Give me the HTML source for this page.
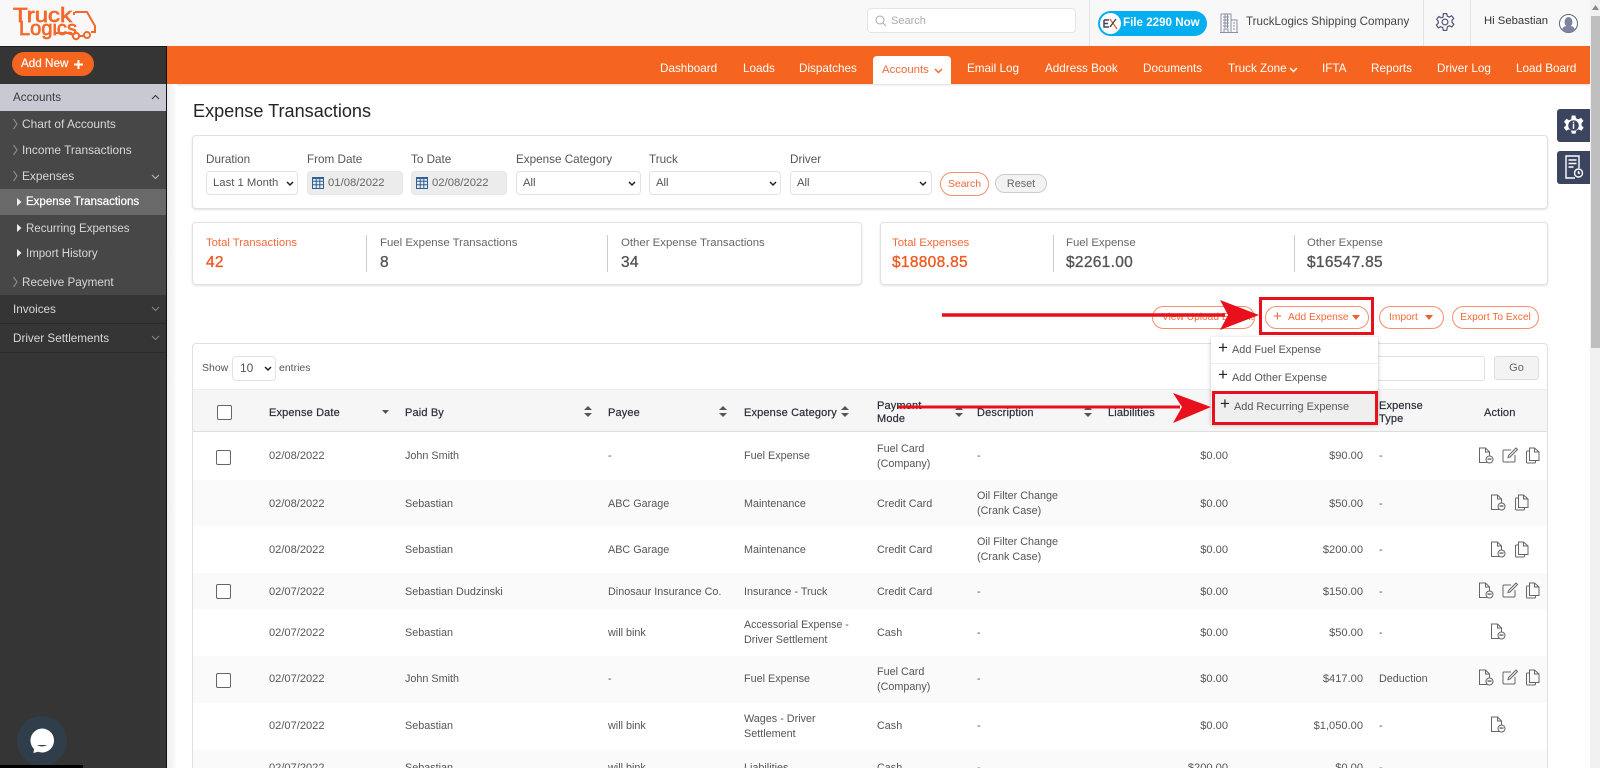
<!DOCTYPE html>
<html lang="en"><head><meta charset="utf-8"><title>Expense Transactions</title>
<style>
*{box-sizing:border-box}
html,body{margin:0;padding:0;width:1600px;height:768px;overflow:hidden;background:#fff}
body{position:relative;font-family:"Liberation Sans",sans-serif;font-size:11px;color:#555}
.a,.t{position:absolute}
.t{line-height:16px;white-space:nowrap}
.nav{color:#fff;font-size:11.7px;top:61px}
.sb{color:#d8d8d8;font-size:11.9px}
.lab{font-size:11.7px;color:#555;top:152px}
.ctl{position:absolute;top:171px;height:24px;background:#fff;border:1px solid #e2e2e2;border-radius:4px;font-size:11.3px;line-height:23px;padding-left:6px;color:#555}
.dis{background:#ececec;padding-left:20px;color:#666}
.card{position:absolute;background:#fff;border:1px solid #e1e1e1;border-radius:4px;box-shadow:0 1px 2px rgba(0,0,0,.12)}
.sl{font-size:11.4px;top:235px;color:#666}
.sv{font-size:15.5px;top:255px;color:#555;letter-spacing:.3px;-webkit-text-stroke:.35px}
.or{color:#f05a22}
.div{position:absolute;width:1px;background:#ccc;top:235px;height:37px}
.btn{position:absolute;top:306px;height:23px;border:1px solid #f58f6c;border-radius:12px;color:#f26a35;font-size:10.2px;line-height:21px;background:#fff;white-space:nowrap;overflow:hidden}
.th{font-size:11px;color:#2a2d3a;-webkit-text-stroke:.2px;letter-spacing:.15px;margin-top:1px}
.c{font-size:10.8px;color:#555}
.d{font-size:11.1px}
.r{text-align:right}
.rw{position:absolute;left:193px;width:1354px;background:#fafafa}
.cb{position:absolute;width:15px;height:15px;border:1.5px solid #666;border-radius:2px;background:#fff}
.i{position:absolute;width:16px;height:17px;fill:none;stroke:#666;stroke-width:1}
.dd{font-size:10.9px;color:#555;margin-top:1px}
.pl{font-size:17px;color:#222}
</style></head><body>
<svg width="0" height="0" style="position:absolute">
<symbol id="f" viewBox="0 0 16 17"><path d="M9 15.500H1.500V1h6l4 4v4M7.500 1v4h4" /><circle cx="11.500" cy="12.500" r="3.500"/><path d="M9.500 12.500h4M9.500 11.300h4" stroke-width=".7"/></symbol>
<symbol id="e" viewBox="0 0 16 17"><path d="M9 3H2a1 1 0 0 0-1 1v10a1 1 0 0 0 1 1h10a1 1 0 0 0 1-1V8"/><path d="M14 1l1.500 1.500L8 10l-2 .6.500-2z"/></symbol>
<symbol id="p" viewBox="0 0 16 17"><path d="M4 4H2.500a1 1 0 0 0-1 1v10a1 1 0 0 0 1 1h7a1 1 0 0 0 1-1v-1.500"/><path d="M4.500 1h5l4.500 4v8.500H4.500zM9.500 1v4h4.500"/></symbol>
</svg>

<!-- top header -->
<div class="a" style="left:0;top:0;width:1590px;height:46px;background:#f8f8f8"></div>
<svg class="a" style="left:8px;top:2px" width="92" height="42" viewBox="0 0 92 42">
<path d="M67 10H79L87 24V30H83M66 10v3M47 31H64M72 34H76" fill="none" stroke="#f4692a" stroke-width="2"/>
<circle cx="68" cy="34" r="3.200" fill="none" stroke="#f4692a" stroke-width="2"/>
<circle cx="79" cy="33" r="3" fill="none" stroke="#f4692a" stroke-width="2"/>
<text x="5" y="20" font-family="Liberation Sans" font-size="20" stroke="#f4692a" stroke-width=".7" fill="#f4692a" textLength="59" lengthAdjust="spacingAndGlyphs">Truck</text>
<text x="11" y="33" font-family="Liberation Sans" font-size="20" stroke="#f4692a" stroke-width=".7" fill="#f4692a" textLength="58" lengthAdjust="spacingAndGlyphs">Logics</text>
</svg>
<div class="a" style="left:867px;top:8px;width:209px;height:25px;background:#fff;border:1px solid #e4e4e4;border-radius:4px"></div>
<svg class="a" style="left:875px;top:15px" width="12" height="12" viewBox="0 0 12 12" fill="none" stroke="#aaa"><circle cx="5" cy="5" r="4"/><path d="M8 8l3 3"/></svg>
<div class="t" style="left:891px;top:13px;color:#aaa;font-size:11px">Search</div>
<div class="a" style="left:1089px;top:0;width:1px;height:46px;background:#e4e4e4"></div>
<div class="a" style="left:1423px;top:0;width:1px;height:46px;background:#e4e4e4"></div>
<div class="a" style="left:1470px;top:0;width:1px;height:46px;background:#e4e4e4"></div>
<div class="a" style="left:1098px;top:11px;width:109px;height:25px;border-radius:13px;background:#04aeef"></div>
<div class="a" style="left:1100px;top:13px;width:21px;height:21px;border-radius:50%;background:#fff"></div>
<svg class="a" style="left:1101px;top:15px" width="19" height="18" viewBox="0 0 19 18" fill="none"><path d="M3 5v7h5M3 8.500h4M3 5h5" stroke="#445" stroke-width="1.500"/><path d="M9 4l7 10" stroke="#e0602c" stroke-width="1.300"/><path d="M15 4l-6 8" stroke="#345" stroke-width="1.300"/></svg>
<div class="t" style="left:1123px;top:15px;color:#fff;font-size:11.600px;font-weight:bold">File 2290 Now</div>
<svg class="a" style="left:1220px;top:13px" width="18" height="20" viewBox="0 0 18 20" fill="none" stroke="#8b8fa6"><path d="M1 19V1h10v18M11 7h6v12M0 19.500h18M3 4h6M3 7h6M3 10h6M3 13h6M13 10h2M13 13h2M13 16h2M5 1v14M7.500 1v14M4 19v-3h4v3"/></svg>
<div class="t" style="left:1246px;top:14px;font-size:11.600px;color:#444">TruckLogics Shipping Company</div>
<svg class="a" style="left:1435px;top:12px" width="20" height="20" viewBox="0 0 24 24" fill="none" stroke="#55597a" stroke-width="1.500"><circle cx="12" cy="12" r="3.500"/><path d="M10 2h4l.7 3 2.500 1 2.700-1.500 2.500 3.200-2 2.300v2.500l2.200 2.200-2.400 3.300-2.800-1.400-2.400 1L14 22h-4l-.7-3.400-2.400-1-2.800 1.400-2.400-3.300 2.200-2.200V11L2.100 8.700 4.600 5.500 7.300 7l2.400-1z"/></svg>
<div class="t" style="left:1484px;top:13px;font-size:11.300px;color:#333">Hi Sebastian</div>
<svg class="a" style="left:1559px;top:14px" width="19" height="19" viewBox="0 0 19 19"><circle cx="9.500" cy="9.500" r="9" fill="#fff" stroke="#5b6280"/><ellipse cx="9.500" cy="8" rx="4" ry="5" fill="#7e84a0"/><path d="M3 16c1-4 3-4 6.500-4s5.500 0 6.500 4a9 9 0 0 1-13 0z" fill="#7e84a0"/></svg>

<!-- orange nav -->
<div class="a" style="left:167px;top:46px;width:1423px;height:38px;background:#f56520;box-shadow:0 1px 2px rgba(0,0,0,.15)"></div>
<div class="a" style="left:873px;top:56px;width:78px;height:28px;background:#fff;border-radius:4px 4px 0 0"></div>
<div class="t nav" style="left:660px">Dashboard</div>
<div class="t nav" style="left:743px">Loads</div>
<div class="t nav" style="left:799px">Dispatches</div>
<div class="t nav" style="left:882px;top:62px;color:#f4693a;font-size:11.400px">Accounts</div>
<svg class="a" style="left:934px;top:68px" width="9" height="6" viewBox="0 0 9 6" fill="none" stroke="#f4693a" stroke-width="1.500"><path d="M1 1l3.500 3.500L8 1"/></svg>
<div class="t nav" style="left:967px">Email Log</div>
<div class="t nav" style="left:1045px">Address Book</div>
<div class="t nav" style="left:1143px">Documents</div>
<div class="t nav" style="left:1228px">Truck Zone</div>
<svg class="a" style="left:1289px;top:67px" width="9" height="6" viewBox="0 0 9 6" fill="none" stroke="#fff" stroke-width="1.500"><path d="M1 1l3.500 3.500L8 1"/></svg>
<div class="t nav" style="left:1322px">IFTA</div>
<div class="t nav" style="left:1371px">Reports</div>
<div class="t nav" style="left:1437px">Driver Log</div>
<div class="t nav" style="left:1516px">Load Board</div>

<!-- sidebar -->
<div class="a" style="left:0;top:46px;width:167px;height:722px;background:#353535;border-right:1px solid #111;border-top:1px solid #1c1c1c"></div>
<div class="a" style="left:167px;top:84px;width:10px;height:684px;background:linear-gradient(90deg,#ececec,#fff)"></div>
<div class="a" style="left:12px;top:52px;width:82px;height:24px;border-radius:12px;background:#f56520"></div>
<div class="t" style="left:21px;top:56px;color:#fff;font-size:11.700px;-webkit-text-stroke:.2px">Add New</div>
<svg class="a" style="left:73px;top:59px" width="11" height="11" viewBox="0 0 11 11" stroke="#fff" stroke-width="2"><path d="M5.500 1v9M1 5.500h9"/></svg>
<div class="a" style="left:0;top:84px;width:166px;height:27px;background:#c9c9d3"></div>
<div class="t" style="left:13px;top:90px;font-size:11.700px;color:#3d3d3d">Accounts</div>
<svg class="a" style="left:151px;top:94px" width="9" height="6" viewBox="0 0 9 6" fill="none" stroke="#333"><path d="M1 5l3.500-3.500L8 5"/></svg>
<div class="a" style="left:0;top:111px;width:166px;height:184px;background:#474747"></div>
<div class="a" style="left:0;top:189px;width:166px;height:26px;background:#696969"></div>
<svg class="a" style="left:13px;top:118px" width="5" height="170" viewBox="0 0 5 170" fill="none" stroke="#999"><path d="M.5 1l3.500 5-3.500 5M.5 27l3.500 5-3.500 5M.5 53l3.500 5-3.500 5M.5 159l3.500 5-3.500 5"/></svg>
<div class="t sb" style="left:22px;top:116px">Chart of Accounts</div>
<div class="t sb" style="left:22px;top:142px">Income Transactions</div>
<div class="t sb" style="left:22px;top:168px">Expenses</div>
<svg class="a" style="left:151px;top:174px" width="9" height="6" viewBox="0 0 9 6" fill="none" stroke="#bbb"><path d="M1 1l3.500 3.500L8 1"/></svg>
<svg class="a" style="left:17px;top:198px" width="5" height="62" viewBox="0 0 5 62" fill="#eee"><path d="M0 0l4.500 4-4.500 4zM0 26l4.500 4-4.500 4zM0 51l4.500 4-4.500 4z"/></svg>
<div class="t" style="left:26px;top:194px;color:#fff;font-size:11.500px;-webkit-text-stroke:.25px">Expense Transactions</div>
<div class="t sb" style="left:26px;top:221px;font-size:11.500px">Recurring Expenses</div>
<div class="t sb" style="left:26px;top:246px;font-size:11.500px">Import History</div>
<div class="t sb" style="left:22px;top:275px;font-size:11.700px">Receive Payment</div>
<div class="a" style="left:0;top:323px;width:166px;height:1px;background:#2b2b2b"></div>
<div class="a" style="left:0;top:352px;width:166px;height:1px;background:#2b2b2b"></div>
<div class="t sb" style="left:13px;top:302px;font-size:11.700px">Invoices</div>
<div class="t sb" style="left:13px;top:331px;font-size:11.700px">Driver Settlements</div>
<svg class="a" style="left:151px;top:306px" width="9" height="36" viewBox="0 0 9 36" fill="none" stroke="#888"><path d="M1 1l3.500 3.500L8 1M1 30l3.500 3.500L8 30"/></svg>
<svg class="a" style="left:17px;top:716px" width="50" height="50" viewBox="0 0 50 50"><circle cx="25" cy="25" r="25" fill="#2f3e4a"/><path d="M25 12.500a12 12 0 1 1-4 23.300L16.500 37l.5-4a12 12 0 0 1 8-20.500z" fill="#fff"/><path d="M20 29q5 3 10 0z" fill="#2f3e4a"/></svg>
<div class="a" style="left:0;top:765px;width:83px;height:3px;background:#000"></div>

<!-- title + filters -->
<div class="t" style="left:193px;top:100px;font-size:18.100px;line-height:22px;color:#242424">Expense Transactions</div>
<div class="card" style="left:192px;top:135px;width:1356px;height:74px"></div>
<div class="t lab" style="left:206px">Duration</div>
<div class="t lab" style="left:307px">From Date</div>
<div class="t lab" style="left:411px">To Date</div>
<div class="t lab" style="left:516px">Expense Category</div>
<div class="t lab" style="left:649px">Truck</div>
<div class="t lab" style="left:790px">Driver</div>
<div class="ctl" style="left:206px;width:92px">Last 1 Month</div>
<div class="ctl dis" style="left:307px;width:96px;border-color:#e6e6e6">01/08/2022</div>
<div class="ctl dis" style="left:411px;width:96px;border-color:#e6e6e6">02/08/2022</div>
<div class="ctl" style="left:516px;width:125px">All</div>
<div class="ctl" style="left:649px;width:132px">All</div>
<div class="ctl" style="left:790px;width:142px">All</div>
<svg class="a" style="left:286px;top:181px" width="650" height="6" viewBox="0 0 650 6" fill="none" stroke="#222" stroke-width="1.500"><path d="M1 1l3 3 3-3M343 1l3 3 3-3M484 1l3 3 3-3M634 1l3 3 3-3"/></svg>
<svg class="a" style="left:312px;top:177px" width="12" height="12" viewBox="0 0 12 12" fill="none" stroke="#2f5f93"><path d="M.5.500h11v11H.5zM4.200.500v11M7.800.500v11M.5 4.200h11M.5 7.800h11"/><path d="M.5 1h11" stroke-width="2"/></svg>
<svg class="a" style="left:416px;top:177px" width="12" height="12" viewBox="0 0 12 12" fill="none" stroke="#2f5f93"><path d="M.5.500h11v11H.5zM4.200.500v11M7.800.500v11M.5 4.200h11M.5 7.800h11"/><path d="M.5 1h11" stroke-width="2"/></svg>
<div class="a" style="left:940px;top:172px;width:49px;height:24px;border:1px solid #f58f6c;border-radius:12px;color:#f2693a;font-size:10.500px;line-height:22px;text-align:center">Search</div>
<div class="a" style="left:995px;top:174px;width:52px;height:19px;border:1px solid #ccc;border-radius:10px;background:#f2f2f2;color:#666;font-size:10.800px;line-height:18px;text-align:center">Reset</div>

<!-- stats -->
<div class="card" style="left:192px;top:222px;width:670px;height:63px"></div>
<div class="card" style="left:880px;top:222px;width:668px;height:63px"></div>
<div class="t sl or" style="left:206px;color:#f4693a;font-size:11.300px">Total Transactions</div><div class="t sv or" style="left:206px">42</div>
<div class="div" style="left:366px"></div>
<div class="t sl" style="left:380px">Fuel Expense Transactions</div><div class="t sv" style="left:380px">8</div>
<div class="div" style="left:607px"></div>
<div class="t sl" style="left:621px">Other Expense Transactions</div><div class="t sv" style="left:621px">34</div>
<div class="t sl or" style="left:892px;color:#f4693a">Total Expenses</div><div class="t sv or" style="left:892px">$18808.85</div>
<div class="div" style="left:1053px"></div>
<div class="t sl" style="left:1066px">Fuel Expense</div><div class="t sv" style="left:1066px">$2261.00</div>
<div class="div" style="left:1294px"></div>
<div class="t sl" style="left:1307px">Other Expense</div><div class="t sv" style="left:1307px">$16547.85</div>

<!-- action buttons -->
<div class="btn" style="left:1152px;width:103px;padding-left:9px">View Upload Expense</div>
<div class="btn" style="left:1265px;width:104px;padding-left:22px">Add Expense</div>
<div class="t" style="left:1273px;top:309px;font-size:15px;color:#f26a35">+</div>
<svg class="a" style="left:1352px;top:315px" width="8" height="5"><path d="M0 0h8L4 5z" fill="#f2602a"/></svg>
<div class="btn" style="left:1379px;width:65px;padding-left:9px">Import</div>
<svg class="a" style="left:1425px;top:315px" width="8" height="5"><path d="M0 0h8L4 5z" fill="#f2602a"/></svg>
<div class="btn" style="left:1452px;width:87px;text-align:center">Export To Excel</div>

<!-- table card -->
<div class="a" style="left:192px;top:343px;width:1356px;height:425px;background:#fff;border:1px solid #e0e0e0;border-bottom:0;border-radius:4px 4px 0 0"></div>
<div class="t" style="left:202px;top:360px;font-size:10.500px;color:#555">Show</div>
<div class="a" style="left:232px;top:356px;width:44px;height:25px;border:1px solid #e2e2e2;border-radius:4px;font-size:12px;line-height:23px;padding-left:7px;color:#555">10</div>
<svg class="a" style="left:264px;top:366px" width="8" height="6" fill="none" stroke="#222" stroke-width="1.500"><path d="M1 1l3 3 3-3"/></svg>
<div class="t" style="left:279px;top:360px;font-size:10.500px;color:#555">entries</div>
<div class="a" style="left:1370px;top:356px;width:115px;height:25px;border:1px solid #e2e2e2;border-radius:3px"></div>
<div class="a" style="left:1494px;top:356px;width:45px;height:24px;border:1px solid #ddd;border-radius:3px;background:#f3f3f3;text-align:center;line-height:22px;color:#666;font-size:11px">Go</div>

<div class="a" style="left:193px;top:389px;width:1354px;height:43px;background:#f6f6f6;border-bottom:1px solid #ddd;border-top:1px solid #eee"></div>
<div class="rw" style="top:480px;height:46px"></div>
<div class="rw" style="top:573px;height:36px"></div>
<div class="rw" style="top:656px;height:47px"></div>
<div class="rw" style="top:750px;height:18px"></div>

<div class="cb" style="left:217px;top:405px"></div>
<div class="t th" style="left:269px;top:404px">Expense Date</div>
<div class="t th" style="left:405px;top:404px">Paid By</div>
<div class="t th" style="left:608px;top:404px">Payee</div>
<div class="t th" style="left:744px;top:404px">Expense Category</div>
<div class="t th" style="left:877px;top:397px">Payment</div>
<div class="t th" style="left:877px;top:410px">Mode</div>
<div class="t th" style="left:977px;top:404px">Description</div>
<div class="t th" style="left:1108px;top:404px">Liabilities</div>
<div class="t th" style="left:1379px;top:397px">Expense</div>
<div class="t th" style="left:1379px;top:410px">Type</div>
<div class="t th" style="left:1484px;top:404px">Action</div>
<svg class="a" style="left:382px;top:405px" width="720" height="14" viewBox="0 0 720 14" fill="#555"><path d="M0 5h7L3.500 9zM202 5l4-4 4 4zM202 8h8l-4 4zM337 5l4-4 4 4zM337 8h8l-4 4zM459 5l4-4 4 4zM459 8h8l-4 4zM573 5l4-4 4 4zM573 8h8l-4 4zM702 5l4-4 4 4zM702 8h8l-4 4z"/></svg>

<!-- row 1 -->
<div class="cb" style="left:216px;top:450px"></div>
<div class="t c d" style="left:269px;top:448px">02/08/2022</div><div class="t c" style="left:405px;top:448px">John Smith</div><div class="t c" style="left:608px;top:448px">-</div><div class="t c" style="left:744px;top:448px">Fuel Expense</div>
<div class="t c" style="left:877px;top:441px">Fuel Card</div><div class="t c" style="left:877px;top:456px">(Company)</div><div class="t c" style="left:977px;top:448px">-</div>
<div class="t c d r" style="left:1128px;width:100px;top:448px">$0.00</div><div class="t c d r" style="left:1263px;width:100px;top:448px">$90.00</div><div class="t c" style="left:1379px;top:448px">-</div>
<svg class="i" style="left:1478px;top:447px"><use href="#f"/></svg><svg class="i" style="left:1502px;top:447px"><use href="#e"/></svg><svg class="i" style="left:1525px;top:447px"><use href="#p"/></svg>

<div class="a" style="left:0;top:1px;width:1600px;height:0">
<!-- row 2 -->
<div class="t c d" style="left:269px;top:495px">02/08/2022</div><div class="t c" style="left:405px;top:495px">Sebastian</div><div class="t c" style="left:608px;top:495px">ABC Garage</div><div class="t c" style="left:744px;top:495px">Maintenance</div><div class="t c" style="left:877px;top:495px">Credit Card</div>
<div class="t c" style="left:977px;top:487px">Oil Filter Change</div><div class="t c" style="left:977px;top:502px">(Crank Case)</div>
<div class="t c d r" style="left:1128px;width:100px;top:495px">$0.00</div><div class="t c d r" style="left:1263px;width:100px;top:495px">$50.00</div><div class="t c" style="left:1379px;top:495px">-</div>
<svg class="i" style="left:1490px;top:493px"><use href="#f"/></svg><svg class="i" style="left:1514px;top:493px"><use href="#p"/></svg>
<!-- row 3 -->
<div class="t c d" style="left:269px;top:541px">02/08/2022</div><div class="t c" style="left:405px;top:541px">Sebastian</div><div class="t c" style="left:608px;top:541px">ABC Garage</div><div class="t c" style="left:744px;top:541px">Maintenance</div><div class="t c" style="left:877px;top:541px">Credit Card</div>
<div class="t c" style="left:977px;top:533px">Oil Filter Change</div><div class="t c" style="left:977px;top:548px">(Crank Case)</div>
<div class="t c d r" style="left:1128px;width:100px;top:541px">$0.00</div><div class="t c d r" style="left:1263px;width:100px;top:541px">$200.00</div><div class="t c" style="left:1379px;top:541px">-</div>
<svg class="i" style="left:1490px;top:540px"><use href="#f"/></svg><svg class="i" style="left:1514px;top:540px"><use href="#p"/></svg>
<!-- row 4 -->
<div class="t c d" style="left:269px;top:583px">02/07/2022</div><div class="t c" style="left:405px;top:583px">Sebastian Dudzinski</div><div class="t c" style="left:608px;top:583px">Dinosaur Insurance Co.</div><div class="t c" style="left:744px;top:583px">Insurance - Truck</div><div class="t c" style="left:877px;top:583px">Credit Card</div><div class="t c" style="left:977px;top:583px">-</div>
<div class="t c d r" style="left:1128px;width:100px;top:583px">$0.00</div><div class="t c d r" style="left:1263px;width:100px;top:583px">$150.00</div><div class="t c" style="left:1379px;top:583px">-</div>
<svg class="i" style="left:1478px;top:581px"><use href="#f"/></svg><svg class="i" style="left:1502px;top:581px"><use href="#e"/></svg><svg class="i" style="left:1525px;top:581px"><use href="#p"/></svg>
<!-- row 5 -->
<div class="t c d" style="left:269px;top:624px">02/07/2022</div><div class="t c" style="left:405px;top:624px">Sebastian</div><div class="t c" style="left:608px;top:624px">will bink</div>
<div class="t c" style="left:744px;top:616px;font-size:10.600px">Accessorial Expense -</div><div class="t c" style="left:744px;top:631px">Driver Settlement</div><div class="t c" style="left:877px;top:624px">Cash</div><div class="t c" style="left:977px;top:624px">-</div>
<div class="t c d r" style="left:1128px;width:100px;top:624px">$0.00</div><div class="t c d r" style="left:1263px;width:100px;top:624px">$50.00</div><div class="t c" style="left:1379px;top:624px">-</div>
<svg class="i" style="left:1490px;top:622px"><use href="#f"/></svg>
<!-- row 8 -->
<div class="t c d" style="left:269px;top:759px">02/07/2022</div><div class="t c" style="left:405px;top:759px">Sebastian</div><div class="t c" style="left:608px;top:759px">will bink</div><div class="t c" style="left:744px;top:759px">Liabilities</div><div class="t c" style="left:877px;top:759px">Cash</div><div class="t c" style="left:977px;top:759px">-</div>
<div class="t c d r" style="left:1128px;width:100px;top:759px">$200.00</div><div class="t c d r" style="left:1263px;width:100px;top:759px">$0.00</div><div class="t c" style="left:1379px;top:759px">-</div>
</div>
<div class="cb" style="left:216px;top:584px"></div>
<!-- row 6 -->
<div class="cb" style="left:216px;top:673px"></div>
<div class="t c d" style="left:269px;top:671px">02/07/2022</div><div class="t c" style="left:405px;top:671px">John Smith</div><div class="t c" style="left:608px;top:671px">-</div><div class="t c" style="left:744px;top:671px">Fuel Expense</div>
<div class="t c" style="left:877px;top:664px">Fuel Card</div><div class="t c" style="left:877px;top:679px">(Company)</div><div class="t c" style="left:977px;top:671px">-</div>
<div class="t c d r" style="left:1128px;width:100px;top:671px">$0.00</div><div class="t c d r" style="left:1263px;width:100px;top:671px">$417.00</div><div class="t c" style="left:1379px;top:671px">Deduction</div>
<svg class="i" style="left:1478px;top:669px"><use href="#f"/></svg><svg class="i" style="left:1502px;top:669px"><use href="#e"/></svg><svg class="i" style="left:1525px;top:669px"><use href="#p"/></svg>
<!-- row 7 -->
<div class="t c d" style="left:269px;top:718px">02/07/2022</div><div class="t c" style="left:405px;top:718px">Sebastian</div><div class="t c" style="left:608px;top:718px">will bink</div>
<div class="t c" style="left:744px;top:711px">Wages - Driver</div><div class="t c" style="left:744px;top:726px">Settlement</div><div class="t c" style="left:877px;top:718px">Cash</div><div class="t c" style="left:977px;top:718px">-</div>
<div class="t c d r" style="left:1128px;width:100px;top:718px">$0.00</div><div class="t c d r" style="left:1263px;width:100px;top:718px">$1,050.00</div><div class="t c" style="left:1379px;top:718px">-</div>
<svg class="i" style="left:1490px;top:716px"><use href="#f"/></svg>

<!-- dropdown -->
<div class="a" style="left:1211px;top:337px;width:167px;height:87px;background:#fff;box-shadow:0 1px 4px rgba(0,0,0,.25);border-radius:2px"></div>
<div class="a" style="left:1211px;top:363px;width:167px;height:1px;background:#eee"></div>
<div class="a" style="left:1211px;top:391px;width:167px;height:33px;background:#efefef"></div>
<div class="t pl" style="left:1218px;top:340px">+</div><div class="t dd" style="left:1232px;top:341px">Add Fuel Expense</div>
<div class="t pl" style="left:1218px;top:367px">+</div><div class="t dd" style="left:1232px;top:369px">Add Other Expense</div>
<div class="t pl" style="left:1220px;top:396px">+</div><div class="t dd" style="left:1234px;top:398px">Add Recurring Expense</div>

<!-- annotations -->
<div class="a" style="left:1259px;top:297px;width:115px;height:38px;border:3.500px solid #e8101c"></div>
<div class="a" style="left:1212px;top:391px;width:166px;height:34px;border:3px solid #e8101c"></div>
<svg class="a" style="left:930px;top:295px" width="290" height="135" viewBox="930 295 290 135" overflow="visible"><path d="M942 315H1225" stroke="#e8101c" stroke-width="3.500"/><path d="M1220 300L1259 315 1220 330 1228 315z" fill="#e8101c"/><path d="M898 407H1180" stroke="#e8101c" stroke-width="3"/><path d="M1173 393L1211 407 1173 423 1182 407z" fill="#e8101c"/></svg>

<!-- right tabs -->
<div class="a" style="left:1557px;top:109px;width:33px;height:33px;background:#3b4560;border-radius:3px 0 0 3px"></div>
<svg class="a" style="left:1562px;top:114px" width="23" height="23" viewBox="0 0 24 24"><path d="M10 1.500h4l.7 3 2.500 1 2.700-1.500 2.500 3.200-2 2.300v2.500l2.200 2.200-2.400 3.300-2.800-1.400-2.400 1-.8 3.400h-4l-.7-3.400-2.400-1-2.800 1.400-2.400-3.300 2.200-2.200V10.500L2.100 8.200 4.600 5 7.300 6.500l2.400-1z" fill="#fff"/><circle cx="12" cy="12" r="5.500" fill="#3b4560"/><path d="M12 10v5.500M12 8v1.200" stroke="#fff" stroke-width="1.500"/></svg>
<div class="a" style="left:1557px;top:151px;width:33px;height:33px;background:#3b4560;border-radius:3px 0 0 3px"></div>
<svg class="a" style="left:1564px;top:155px" width="20" height="25" viewBox="0 0 20 25" fill="none" stroke="#fff" stroke-width="1.400"><path d="M11 23H2V1h13v12M4.500 5h8M4.500 8.500h8M4.500 12h5"/><circle cx="14.500" cy="18" r="4"/><path d="M14.500 16v2.200h1.500"/></svg>

<!-- scrollbar -->
<div class="a" style="left:1590px;top:0;width:10px;height:768px;background:#f1f1f1"></div>
<div class="a" style="left:1591px;top:16px;width:9px;height:332px;background:#bfbfbf"></div>
<svg class="a" style="left:1592px;top:5px" width="7" height="5"><path d="M0 5l3.500-5L7 5z" fill="#888"/></svg>
</body></html>
